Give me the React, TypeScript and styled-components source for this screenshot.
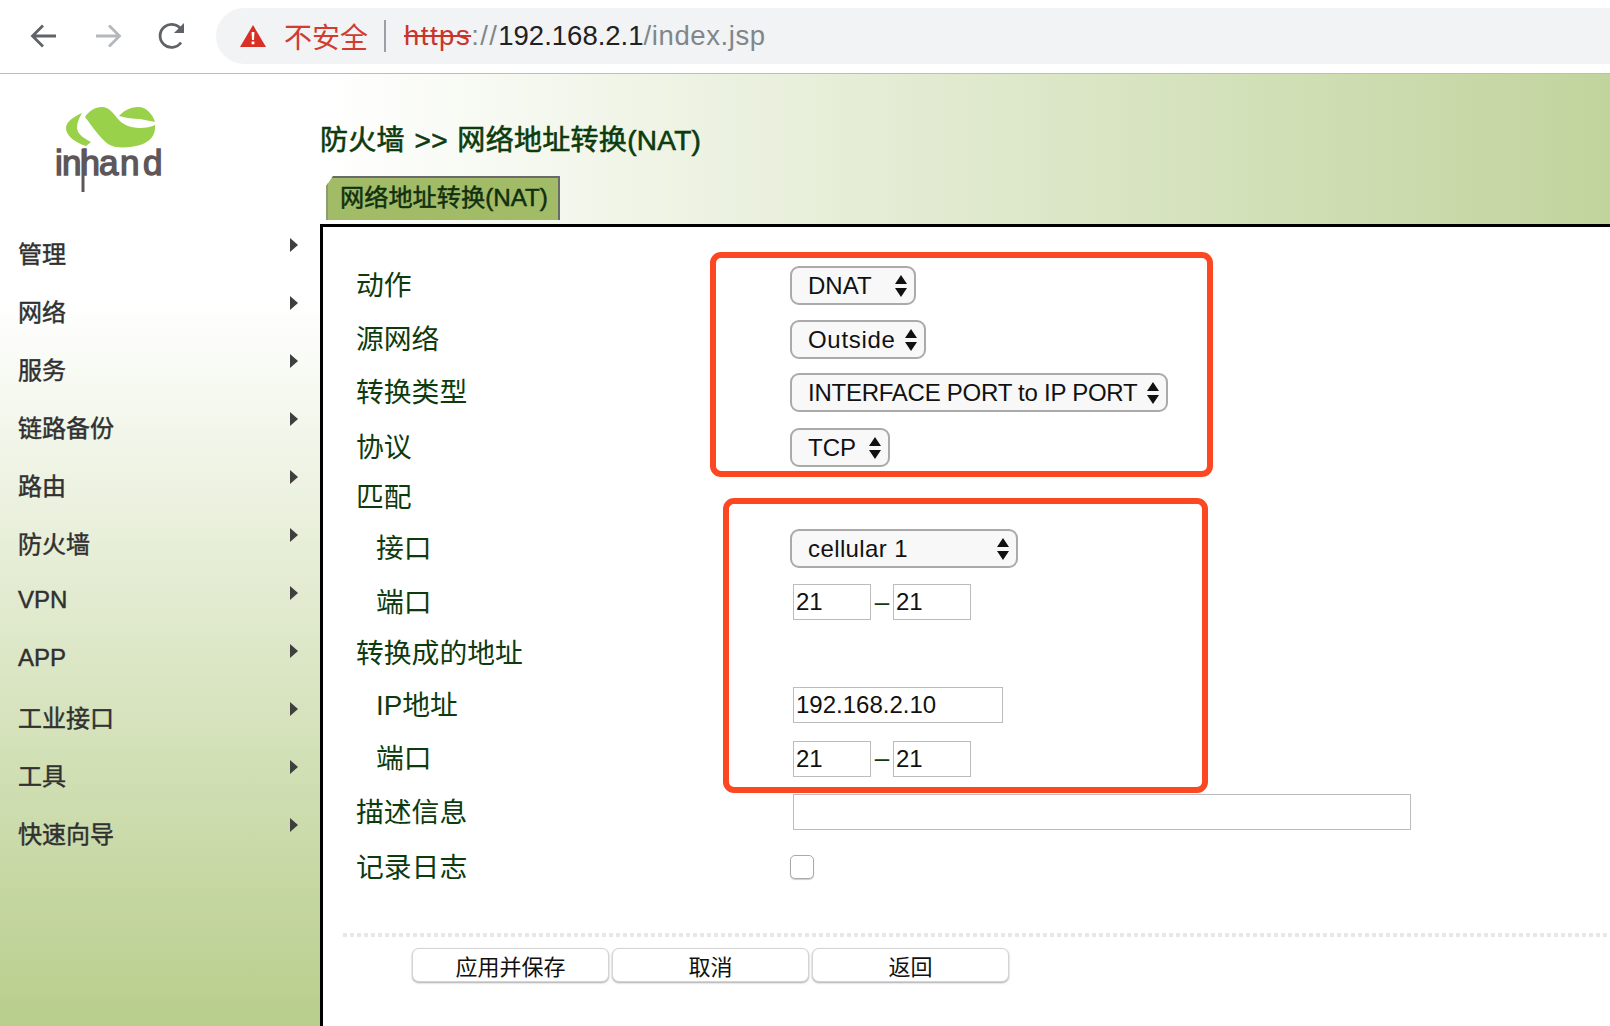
import React from 'react';
import styled, { createGlobalStyle } from 'styled-components';

const FONT = '"Liberation Sans", "Noto Sans CJK SC", sans-serif';

const menuItems = ['管理', '网络', '服务', '链路备份', '路由', '防火墙', 'VPN', 'APP', '工业接口', '工具', '快速向导'];

export default function App() {
  return (
    <Page>
      <GlobalStyle />
      <BrowserBar>
        <NavIcon viewBox="0 0 28 28">
          <path d="M26 14H3M13 3.5 2.5 14 13 24.5" fill="none" stroke="#5f6368" strokeWidth="2.8" />
        </NavIcon>
        <NavIcon viewBox="0 0 28 28">
          <path d="M2 14h23M15 3.5 25.5 14 15 24.5" fill="none" stroke="#b5b8bb" strokeWidth="2.8" />
        </NavIcon>
        <NavIcon viewBox="0 0 28 28">
          <path d="M23 20.5A11.5 11.5 0 1 1 23.5 8" fill="none" stroke="#5f6368" strokeWidth="2.8" />
          <path d="M26 1v10H16z" fill="#5f6368" />
        </NavIcon>
        <AddressPill>
          <svg width="26" height="22" viewBox="0 0 26 22">
            <path d="M13 0 26 22H0z" fill="#d93025" />
            <path d="M11.6 7h2.8l-.4 8h-2zM11.6 16.5h2.8v2.8h-2.8z" fill="#fff" />
          </svg>
          <Insecure>不安全</Insecure>
          <PillDivider />
          <Url>
            <Scheme>https</Scheme>
            <Dim $spacing={1.4}>://</Dim>192.168.2.1<Dim $spacing={0.6}>/index.jsp</Dim>
          </Url>
        </AddressPill>
      </BrowserBar>
      <Body>
        <Sidebar>
          <LogoBox>
            <svg width="150" height="110" viewBox="0 0 150 110">
              <path d="M42 23C33 27 26 32 26 38c0 8 10 15 20 18l5-4C43 48 37 43 37 38c0-5 2-10 5-15z" fill="#9ad14b" />
              <path d="M45 27C49 21 55 17 62 17c7 0 11 6 16 12 4 5 12 9 22 9 6 0 11-1 15-3 1 10-5 17-15 20-10 3-25 4-32-1C60 48 52 36 45 27z" fill="#9ad14b" />
              <path d="M79 26C84 20 92 17 98 17c9 0 15 8 17 15-5-1-10-2-15-3-7 0-14-1-21-3z" fill="#9ad14b" />
              <LogoWord x="15 22 40.5 59 80 103" y="85">inhand</LogoWord>
              <line x1="43" y1="59" x2="43" y2="102" stroke="#5e5659" strokeWidth="3" />
            </svg>
          </LogoBox>
          <Menu>
            {menuItems.map((item) => (
              <MenuItem key={item}>
                {item}
                <MenuArrow />
              </MenuItem>
            ))}
          </Menu>
        </Sidebar>
        <Main>
          <Header>
            <PageTitle>防火墙 &gt;&gt; 网络地址转换(NAT)</PageTitle>
            <Tab>网络地址转换(NAT)</Tab>
          </Header>
          <Panel>
            <FormTable>
              <Row $h={54}>
                <Label>动作</Label>
                <Select $w={126}>DNAT<Updown /></Select>
              </Row>
              <Row $h={54}>
                <Label>源网络</Label>
                <Select $w={136} $spacing={0.7}>Outside<Updown /></Select>
              </Row>
              <Row $h={53}>
                <Label>转换类型</Label>
                <Select $w={378} $spacing={-0.25}>INTERFACE PORT to IP PORT<Updown /></Select>
              </Row>
              <Row $h={56}>
                <Label>协议</Label>
                <Select $w={100}>TCP<Updown /></Select>
              </Row>
              <Row $h={44}>
                <Label>匹配</Label>
              </Row>
              <Row $h={59}>
                <Label $sub>接口</Label>
                <Select $w={228} $spacing={0.4}>cellular 1<Updown /></Select>
              </Row>
              <Row $h={48}>
                <Label $sub>端口</Label>
                <PortRange />
              </Row>
              <Row $h={55}>
                <Label>转换成的地址</Label>
              </Row>
              <Row $h={48}>
                <Label $sub>IP地址</Label>
                <TextInput $w={210} defaultValue="192.168.2.10" readOnly />
              </Row>
              <Row $h={59}>
                <Label $sub>端口</Label>
                <PortRange />
              </Row>
              <Row $h={48}>
                <Label>描述信息</Label>
                <TextInput $w={618} readOnly />
              </Row>
              <Row $h={62}>
                <Label>记录日志</Label>
                <CheckBox type="checkbox" />
              </Row>
            </FormTable>
            <Dotted />
            <Actions>
              <ActionButton>应用并保存</ActionButton>
              <ActionButton>取消</ActionButton>
              <ActionButton>返回</ActionButton>
            </Actions>
          </Panel>
        </Main>
      </Body>
      <MarkTop />
      <MarkBottom />
    </Page>
  );
}

function Updown() {
  return (
    <UpdownIcon viewBox="0 0 12 22">
      <path d="M6 0 12 9H0zM6 22 0 13h12z" fill="#111" />
    </UpdownIcon>
  );
}

function PortRange() {
  return (
    <Ports>
      <TextInput $w={78} defaultValue="21" readOnly />
      <Dash>–</Dash>
      <TextInput $w={78} defaultValue="21" readOnly />
    </Ports>
  );
}

const GlobalStyle = createGlobalStyle`
  html, body {
    margin: 0;
    height: 100%;
    overflow: hidden;
    background: #fff;
    font-family: ${FONT};
  }
`;

const Page = styled.div`
  position: relative;
  width: 1610px;
  height: 1026px;
  overflow: hidden;
`;

const BrowserBar = styled.div`
  height: 74px;
  box-sizing: border-box;
  padding: 7px 0 9px 30px;
  display: flex;
  align-items: center;
  border-bottom: 1px solid #bdbdbd;
`;

const NavIcon = styled.svg`
  width: 28px;
  height: 28px;
  margin-right: 36px;
  flex: none;
`;

const AddressPill = styled.div`
  flex: 1;
  height: 56px;
  margin-left: -6px;
  padding-left: 24px;
  display: flex;
  align-items: center;
  background: #f1f3f4;
  border-radius: 28px 0 0 28px;
`;

const Insecure = styled.span`
  margin-left: 18px;
  font-size: 28px;
  color: #d33b30;
`;

const PillDivider = styled.span`
  width: 2px;
  height: 32px;
  margin: 0 18px 0 16px;
  background: #9aa0a6;
`;

const Url = styled.span`
  font-size: 27.5px;
  color: #202124;
`;

const Scheme = styled.span`
  letter-spacing: 1.5px;
  color: #c9352b;
  text-decoration: line-through;
`;

const Dim = styled.span<{ $spacing: number }>`
  letter-spacing: ${(p) => p.$spacing}px;
  color: #80868b;
`;

const Body = styled.div`
  display: flex;
  height: 952px;
`;

const Sidebar = styled.aside`
  width: 320px;
  flex: none;
  background: linear-gradient(#fff 0, #fff 226px, #b8ce8c 100%);
`;

const LogoBox = styled.div`
  height: 149px;
  padding: 16px 0 0 40px;
  box-sizing: border-box;
`;

const LogoWord = styled.text`
  font-family: ${FONT};
  font-size: 35px;
  fill: #5e5659;
  stroke: #5e5659;
  stroke-width: 1.4px;
`;

const Menu = styled.nav`
  display: flex;
  flex-direction: column;
`;

const MenuItem = styled.div`
  height: 58px;
  padding: 0 22px 0 18px;
  display: flex;
  align-items: center;
  justify-content: space-between;
  font-size: 24px;
  color: #303030;
  -webkit-text-stroke: 0.45px #303030;
`;

const MenuArrow = styled.span`
  margin-bottom: 15px;
  border-left: 8px solid #3f3f3f;
  border-top: 7.5px solid transparent;
  border-bottom: 7.5px solid transparent;
`;

const Main = styled.main`
  flex: 1;
  min-width: 0;
  display: flex;
  flex-direction: column;
`;

const Header = styled.div`
  height: 150px;
  box-sizing: border-box;
  padding-top: 51px;
  background: linear-gradient(90deg, #fff 0, #c1d49d 100%);
`;

const PageTitle = styled.h1`
  margin: 0;
  font-size: 28px;
  font-weight: 400;
  line-height: 32px;
  letter-spacing: 0.3px;
  word-spacing: 1.5px;
  color: #0d3b0e;
  -webkit-text-stroke: 0.6px #0d3b0e;
`;

const Tab = styled.div`
  margin: 19px 0 0 6px;
  width: 234px;
  height: 44px;
  box-sizing: border-box;
  padding-left: 12px;
  font-size: 24.2px;
  line-height: 39px;
  color: #10300f;
  -webkit-text-stroke: 0.5px #10300f;
  background: #a2bb67;
  border-top: 2px solid #6a6a6a;
  border-right: 2px solid #6a6a6a;
  border-left: 2px solid #8d9a78;
  clip-path: polygon(7px 0, 100% 0, 100% 100%, 0 100%, 0 10px);
`;

const Panel = styled.section`
  flex: 1;
  background: #fff;
  border-top: 3px solid #000;
  border-left: 3px solid #000;
  padding-top: 31px;
`;

const FormTable = styled.div`
  display: flex;
  flex-direction: column;
  padding-left: 33px;
`;

const Row = styled.div<{ $h: number }>`
  height: ${(p) => p.$h}px;
  display: grid;
  grid-template-columns: 434px 1fr;
  align-items: center;
`;

const Label = styled.label<{ $sub?: boolean }>`
  padding-left: ${(p) => (p.$sub ? 20 : 0)}px;
  padding-bottom: 5px;
  font-size: 27.8px;
  color: #0d3b0e;
`;

const Select = styled.div<{ $w: number; $spacing?: number }>`
  position: relative;
  width: ${(p) => p.$w}px;
  height: 39px;
  box-sizing: border-box;
  padding-left: 16px;
  font-size: 24px;
  line-height: 35px;
  letter-spacing: ${(p) => p.$spacing ?? 0}px;
  color: #111;
  background: #f8f8f8;
  border: 2px solid #aaa;
  border-radius: 9px;
`;

const UpdownIcon = styled.svg`
  position: absolute;
  top: 7px;
  right: 7px;
  width: 12px;
  height: 22px;
`;

const Ports = styled.div`
  display: flex;
  align-items: center;
  margin-left: 3px;
`;

const Dash = styled.span`
  width: 22px;
  text-align: center;
  font-size: 26px;
  color: #0d3b0e;
`;

const TextInput = styled.input<{ $w: number }>`
  width: ${(p) => p.$w}px;
  height: 36px;
  box-sizing: border-box;
  padding: 2px;
  margin-left: ${(p) => (p.$w > 78 ? 3 : 0)}px;
  font: 24px ${FONT};
  color: #111;
  background: #fff;
  border: 1px solid #bcbcbc;
  outline: none;
`;

const CheckBox = styled.input`
  appearance: none;
  width: 24px;
  height: 24px;
  margin: 0;
  background: #fff;
  border: 1px solid #aaa;
  border-radius: 5px;
  box-shadow: 0 1px 1px #ccc;
`;

const Dotted = styled.div`
  margin: 35px 0 0 20px;
  height: 4px;
  background: repeating-linear-gradient(90deg, #e8e8e8 0 4px, #fff 4px 7px);
`;

const Actions = styled.div`
  display: flex;
  gap: 3px;
  margin: 11px 0 0 89px;
`;

const ActionButton = styled.button`
  width: 197px;
  height: 34px;
  padding: 0;
  font: 22px ${FONT};
  color: #111;
  background: #fff;
  border: 1px solid #d4d4d4;
  border-radius: 7px;
  box-shadow: 0 1px 2px #aaa;
`;

const RedMark = styled.div`
  position: absolute;
  box-sizing: border-box;
  border: 6px solid #fb4823;
  border-radius: 11px;
  pointer-events: none;
`;

const MarkTop = styled(RedMark)`
  left: 710px;
  top: 252px;
  width: 503px;
  height: 225px;
`;

const MarkBottom = styled(RedMark)`
  left: 723px;
  top: 498px;
  width: 485px;
  height: 295px;
`;
